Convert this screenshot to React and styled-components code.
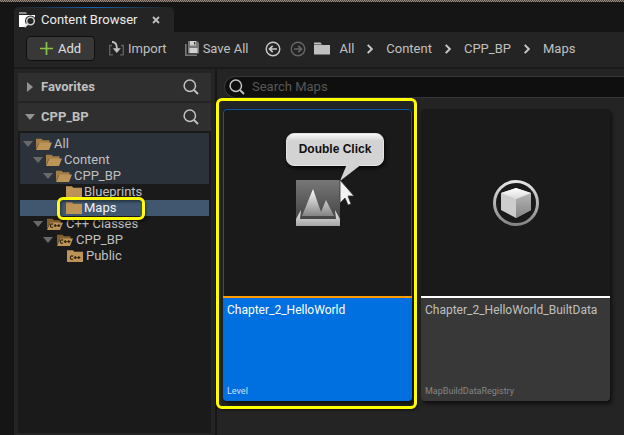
import React from "react";
import styled, { createGlobalStyle } from "styled-components";

const GlobalStyle = createGlobalStyle`
  *, *::before, *::after { box-sizing: border-box; }
  body { margin: 0; background: #151515; }
  button, input { font: inherit; color: inherit; }
  ul, ol { margin: 0; padding: 0; list-style: none; }
  svg { display: block; flex: none; }
`;

const Page = styled.div`
  min-height: 100vh;
  display: flex;
  flex-direction: column;
  overflow: hidden;
  font: 13px/16px Roboto, "Noto Sans", sans-serif;
  color: #c0c0c0;
  background: #151515;
`;

const ViewportEdge = styled.div`
  height: 2px;
  background: repeating-conic-gradient(#4b423d 0 25%, #a08d82 0 50%) 0 0 / 2px 2px;
`;

const Window = styled.main`
  flex: 1;
  display: flex;
  flex-direction: column;
  margin-left: 14px;
  padding-top: 5px;
`;

const Tab = styled.div`
  align-self: flex-start;
  display: flex;
  align-items: center;
  gap: 5px;
  width: 160px;
  height: 25px;
  padding: 0 14px 0 5px;
  border-radius: 5px 5px 0 0;
  color: #ececec;
  background:
    linear-gradient(90deg, #242424 5%, #1464b4 50%, #242424 95%) top / 100% 1px no-repeat,
    #242424;
`;

const TabTitle = styled.span`
  flex: 1;
  white-space: nowrap;
`;

const PlainButton = styled.button`
  display: flex;
  align-items: center;
  gap: ${(p) => p.$gap || 0}px;
  padding: 0;
  border: 0;
  background: none;
  white-space: nowrap;
  cursor: pointer;
`;

const Toolbar = styled.div`
  display: flex;
  align-items: center;
  height: 37px;
  padding: 0 12px 2px;
  border-bottom: 2px solid #1a1a1a;
  background: #242424;
`;

const AddButton = styled(PlainButton)`
  justify-content: center;
  width: 69px;
  height: 25px;
  margin-right: 14px;
  border: 1px solid #0f0f0f;
  border-radius: 4px;
  color: #e0e0e0;
  background: #383838;
`;

const Actions = styled.div`
  display: flex;
  gap: 18px;
  margin-right: 17px;
`;

const History = styled.div`
  display: flex;
  gap: 9px;
  margin-right: 8px;
`;

const Breadcrumbs = styled.nav`
  display: flex;
  align-items: center;
  gap: 13px;
`;

const Body = styled.div`
  flex: 1;
  display: flex;
  background: #242424;
`;

const Sidebar = styled.aside`
  flex: none;
  display: flex;
  flex-direction: column;
  gap: 2px;
  width: 203px;
  padding: 4px 4px 2px;
  border-right: 2px solid #161616;
`;

const Section = styled.section`
  flex: ${(p) => (p.$grow ? 1 : "none")};
  background: #1a1a1a;
`;

const SectionHeader = styled.header`
  display: flex;
  align-items: center;
  justify-content: space-between;
  height: 28px;
  padding: 0 12px 0 7px;
  font-weight: 700;
  background: #2f2f2f;
`;

const Tree = styled.ul`
  padding: 2px 2px 0;
`;

const TreeRow = styled.li`
  position: relative;
  display: flex;
  align-items: center;
  height: ${(p) => (p.$first ? 19 : 16)}px;
  padding-top: ${(p) => (p.$first ? 3 : 0)}px;
  padding-left: ${(p) => 3 + p.$depth * 10}px;
  color: ${(p) => (p.$state === "selected" ? "#f2f2f2" : "#c0c0c0")};
  background: ${(p) =>
    p.$state === "selected" ? "#40576f" : p.$state === "parent" ? "#2c323a" : "transparent"};
`;

const TwistySlot = styled.span`
  flex: none;
  width: ${(p) => (p.$code ? 14 : 13)}px;
`;

const TreeMark = styled.span`
  position: absolute;
  top: -3px;
  left: 37px;
  width: 88px;
  height: 23px;
  z-index: 1;
  border: 3px solid #ffff00;
  border-radius: 6px;
  box-shadow: 1px 2px 3px #0008, inset 1px 2px 3px #0006;
  pointer-events: none;
`;

const Browser = styled.section`
  flex: 1;
  min-width: 0;
  padding: 7px 0 0 7px;
`;

const SearchBox = styled.label`
  display: flex;
  align-items: center;
  gap: 7px;
  height: 22px;
  padding-left: 4px;
  border: 1px solid #363636;
  border-right: 0;
  border-radius: 11px 0 0 11px;
  color: #c8c8c8;
  background: #0f0f0f;
`;

const SearchInput = styled.input`
  flex: 1;
  min-width: 0;
  padding: 0;
  border: 0;
  outline: 0;
  background: none;
  &::placeholder { color: #575757; opacity: 1; }
`;

const Tiles = styled.ul`
  display: flex;
  flex-wrap: wrap;
  gap: 9px;
  margin-left: -1px;
  padding-top: 11px;
`;

const TileItem = styled.li`
  position: relative;
`;

const Tile = styled.button`
  display: flex;
  flex-direction: column;
  width: 189px;
  padding: 0;
  overflow: hidden;
  border: 0;
  border-radius: 4px;
  text-align: left;
  color: ${(p) => (p.$selected ? "#ffffff" : "#c0c0c0")};
  background: #1a1a1a;
  box-shadow: 2px 3px 4px #0009;
`;

const Thumb = styled.span`
  display: flex;
  align-items: center;
  justify-content: center;
  width: 100%;
  height: 187px;
  border: 1px solid ${(p) => (p.$selected ? "#0b57a8" : "#1a1a1a")};
  border-bottom: 0;
  border-radius: 4px 4px 0 0;
`;

const TileInfo = styled.span`
  display: flex;
  flex-direction: column;
  justify-content: space-between;
  width: 100%;
  height: 105px;
  padding: 4px 4px 3px;
  border-top: 2px solid ${(p) => (p.$selected ? "#ff9c00" : "#ffffff")};
  background: ${(p) => (p.$selected ? "#0070e0" : "#383838")};
`;

const TileName = styled.span`
  font-size: 12px;
`;

const TileType = styled.span`
  font-size: 9px;
  line-height: 14px;
  color: ${(p) => (p.$selected ? "#c9e0f8" : "#858585")};
`;

const TileMark = styled.span`
  position: absolute;
  inset: -11px -5px -8px -7px;
  border: 3px solid #ffff00;
  border-radius: 6px;
  box-shadow: 1px 1px 3px #0008;
  pointer-events: none;
`;

const Callout = styled.div`
  position: absolute;
  top: 24px;
  left: 63px;
  width: 98px;
  height: 33px;
  border: 1px solid #e4e4e4;
  border-radius: 8px;
  text-align: center;
  font: bold 12px/30px "Liberation Sans", Arial, sans-serif;
  color: #111;
  background: linear-gradient(#f8f8f8, #d3d3d3 7px);
  box-shadow: 1px 2px 4px #000c;
`;

const CalloutTail = styled.svg`
  position: absolute;
  top: 30px;
  left: 52px;
`;

const Pointer = styled.svg`
  position: absolute;
  top: 69px;
  left: 116px;
`;

const BrowserIcon = () => (
  <svg width="17" height="16" viewBox="0 0 17 16">
    <path d="M0 0h7l1 2H0z" fill="#8d8d8d" />
    <path d="M0 3h16v12H0z" fill="#fff" />
    <circle cx="11.5" cy="9" r="5.5" fill="#242424" />
    <path d="M6 15l3-3h8v4H6z" fill="#242424" />
    <circle cx="11.5" cy="9" r="3.8" fill="none" stroke="#d0d0d0" strokeWidth="1.5" />
    <path d="M8.7 11.8L5.5 15" stroke="#e0e0e0" strokeWidth="2" />
  </svg>
);

const CloseIcon = () => (
  <svg width="8" height="8" viewBox="0 0 8 8" stroke="#c0c0c0" strokeWidth="1.8">
    <path d="M1 1l6 6M7 1L1 7" />
  </svg>
);

const PlusIcon = () => (
  <svg width="13" height="13" viewBox="0 0 13 13" stroke="#8bc24a" strokeWidth="1.7">
    <path d="M6.5 0v13M0 6.5h13" />
  </svg>
);

const ImportIcon = () => (
  <svg width="15" height="15" viewBox="0 0 15 15" fill="none">
    <path d="M3 4.5H.7v9.3H4M11 13.800h3.300V4.5H12" stroke="#636363" strokeWidth="1.3" />
    <path d="M3 .8c3 .2 4.800 2 4.800 6v2" stroke="#c0c0c0" strokeWidth="1.8" />
    <path d="M3.800 7.200h8L7.800 12z" fill="#c0c0c0" />
  </svg>
);

const SaveIcon = () => (
  <svg width="14" height="15" viewBox="0 0 14 15">
    <path d="M.8 3v11.200H12" fill="none" stroke="#777" strokeWidth="1.6" />
    <path d="M3 0h9l2 2v10.500H3z" fill="#777" />
    <path d="M5 0h6v4.500H5zM4.500 7h8v5h-8z" fill="#d0d0d0" />
    <path d="M9 1h1.300v2.500H9z" fill="#333" />
  </svg>
);

const ArrowIcon = ({ forward }) => (
  <svg width="16" height="16" viewBox="0 0 16 16" fill="none" stroke={forward ? "#666" : "#c8c8c8"} strokeWidth="1.4">
    <circle cx="8" cy="8" r="6.800" />
    <path d={forward ? "M4 8h7M8.300 4.800L11.500 8l-3.200 3.200" : "M12 8H5M7.700 4.800L4.500 8l3.200 3.200"} strokeWidth="1.7" />
  </svg>
);

const PathFolderIcon = () => (
  <svg width="16" height="13" viewBox="0 0 16 13">
    <path d="M0 .5h6.500L8 2.500H0z" fill="#c0c0c0" />
    <path d="M0 3h16v9.500H0z" fill="#c0c0c0" />
  </svg>
);

const ChevronIcon = () => (
  <svg width="6" height="10" viewBox="0 0 6 10" fill="none" stroke="#c8c8c8" strokeWidth="1.9">
    <path d="M.7 .8L4.800 5 .7 9.200" />
  </svg>
);

const SearchIcon = () => (
  <svg width="16" height="16" viewBox="0 0 16 16" fill="none" stroke="#c4c4c4" strokeWidth="1.5">
    <circle cx="6.800" cy="6.800" r="5.700" />
    <path d="M11 11l4 4" strokeWidth="1.8" />
  </svg>
);

const Twisty = ({ open, dim }) => (
  <svg width="10" height="10" viewBox="0 0 10 10" fill={dim ? "#68696b" : "#929292"}>
    <path d={open ? "M0 2h10L5 8z" : "M2 0l6 5-6 5z"} />
  </svg>
);

const FolderIcon = ({ open, code }) => (
  <svg width="16" height="12" viewBox="0 0 16 12">
    {open ? (
      <>
        <path d="M0 .7h5.500L7 2.200h6.500V5H3L0 11z" fill={code ? "#80602f" : "#a27d45"} />
        <path d="M3.500 4.500H16L13 12H0z" fill="#bd9457" />
      </>
    ) : (
      <path d="M0 .3h6l1.300 1.500H16V12H0z" fill="#bd9457" />
    )}
    {code && (
      <g fill="none" stroke="#30220e" strokeWidth="1.100">
        <path d="M6.200 6.200C4.700 5.300 3.500 6.200 3.400 7.500s1 2.400 2.500 1.600" />
        <path d="M6.800 7.600h3M8.300 6.100v3M10.300 7.600h3M11.800 6.100v3" />
      </g>
    )}
  </svg>
);

const LevelIcon = () => (
  <svg width="44" height="46" viewBox="0 0 44 46">
    <defs>
      <linearGradient id="levelBack" x2="0" y2="1">
        <stop stopColor="#777" /><stop offset="1" stopColor="#3c3c3c" />
      </linearGradient>
      <linearGradient id="levelPeak" x2="0" y2="1">
        <stop stopColor="#fff" /><stop offset="1" stopColor="#848484" />
      </linearGradient>
      <linearGradient id="levelBase" x2="0" y2="1">
        <stop stopColor="#ececec" /><stop offset="1" stopColor="#a6a6a6" />
      </linearGradient>
    </defs>
    <path d="M0 0h44v46H0z" fill="url(#levelBack)" />
    <path d="M6 36L17 9l8 23 5-12 8 16z" fill="url(#levelPeak)" />
    <path d="M0 39l5-9-1 9h36l-1-9 5 9v7H0z" fill="url(#levelBase)" />
  </svg>
);

const RegistryIcon = () => (
  <svg width="46" height="46" viewBox="0 0 46 46">
    <defs>
      <linearGradient id="ring" x2="0" y2="1">
        <stop stopColor="#e4e4e4" /><stop offset="1" stopColor="#858585" />
      </linearGradient>
      <linearGradient id="cubeTop" x2="0" y2="1">
        <stop stopColor="#fff" /><stop offset="1" stopColor="#dadada" />
      </linearGradient>
      <linearGradient id="cubeRight" x2="0" y2="1">
        <stop stopColor="#b4b4b4" /><stop offset="1" stopColor="#858585" />
      </linearGradient>
    </defs>
    <circle cx="23" cy="23" r="21.500" fill="#1a1a1a" stroke="url(#ring)" strokeWidth="3" />
    <path d="M23 8l15 5v17l-15 8-15-8V13z" fill="#cdcdcd" />
    <path d="M38 13v17l-15 8V19z" fill="url(#cubeRight)" />
    <path d="M23 8l15 5-15 6-15-6z" fill="url(#cubeTop)" />
  </svg>
);

const PATH = ["All", "Content", "CPP_BP", "Maps"];

const FOLDERS = [
  { name: "All", depth: 0, open: true, state: "parent" },
  { name: "Content", depth: 1, open: true, state: "parent" },
  { name: "CPP_BP", depth: 2, open: true, state: "parent" },
  { name: "Blueprints", depth: 3 },
  { name: "Maps", depth: 3, state: "selected" },
  { name: "C++ Classes", depth: 1, open: true, code: true },
  { name: "CPP_BP", depth: 2, open: true, code: true },
  { name: "Public", depth: 3, code: true },
];

export default function App() {
  return (
    <>
      <GlobalStyle />
      <Page>
        <ViewportEdge />
        <Window>
          <Tab>
            <BrowserIcon />
            <TabTitle>Content Browser</TabTitle>
            <PlainButton aria-label="Close tab"><CloseIcon /></PlainButton>
          </Tab>
          <Toolbar>
            <AddButton $gap={5}><PlusIcon />Add</AddButton>
            <Actions>
              <PlainButton $gap={4}><ImportIcon />Import</PlainButton>
              <PlainButton $gap={4}><SaveIcon />Save All</PlainButton>
            </Actions>
            <History>
              <PlainButton aria-label="Back"><ArrowIcon /></PlainButton>
              <PlainButton aria-label="Forward"><ArrowIcon forward /></PlainButton>
            </History>
            <Breadcrumbs aria-label="Path">
              {PATH.map((name, i) => (
                <React.Fragment key={name}>
                  {i > 0 && <ChevronIcon />}
                  <PlainButton $gap={9}>{i === 0 && <PathFolderIcon />}{name}</PlainButton>
                </React.Fragment>
              ))}
            </Breadcrumbs>
          </Toolbar>
          <Body>
            <Sidebar>
              <Section>
                <SectionHeader>
                  <PlainButton $gap={6}><Twisty />Favorites</PlainButton>
                  <PlainButton aria-label="Search favorites"><SearchIcon /></PlainButton>
                </SectionHeader>
              </Section>
              <Section $grow>
                <SectionHeader>
                  <PlainButton $gap={6}><Twisty open />CPP_BP</PlainButton>
                  <PlainButton aria-label="Search folders"><SearchIcon /></PlainButton>
                </SectionHeader>
                <Tree>
                  {FOLDERS.map((f, i) => (
                    <TreeRow key={i} $first={i === 0} $depth={f.depth} $state={f.state}>
                      <TwistySlot $code={f.code}>{f.open && <Twisty open dim />}</TwistySlot>
                      <PlainButton $gap={f.code ? 3 : 2}>
                        <FolderIcon open={f.open} code={f.code} />
                        {f.name}
                      </PlainButton>
                      {f.state === "selected" && <TreeMark />}
                    </TreeRow>
                  ))}
                </Tree>
              </Section>
            </Sidebar>
            <Browser>
              <SearchBox>
                <SearchIcon />
                <SearchInput type="text" placeholder="Search Maps" aria-label="Search Maps" />
              </SearchBox>
              <Tiles>
                <TileItem>
                  <Tile $selected>
                    <Thumb $selected><LevelIcon /></Thumb>
                    <TileInfo $selected>
                      <TileName>Chapter_2_HelloWorld</TileName>
                      <TileType $selected>Level</TileType>
                    </TileInfo>
                  </Tile>
                  <TileMark />
                  <Callout>
                    Double Click
                    <CalloutTail width="24" height="18" viewBox="0 0 24 18">
                      <path d="M8 0h15L1 17z" fill="#d3d3d3" />
                    </CalloutTail>
                  </Callout>
                  <Pointer width="16" height="30" viewBox="0 0 16 30">
                    <path d="M1 2v23l5-5 3 7 3-1-3-8h6z" fill="#f2f2f2" stroke="#333" strokeWidth=".8" />
                  </Pointer>
                </TileItem>
                <TileItem>
                  <Tile>
                    <Thumb><RegistryIcon /></Thumb>
                    <TileInfo>
                      <TileName>Chapter_2_HelloWorld_BuiltData</TileName>
                      <TileType>MapBuildDataRegistry</TileType>
                    </TileInfo>
                  </Tile>
                </TileItem>
              </Tiles>
            </Browser>
          </Body>
        </Window>
      </Page>
    </>
  );
}
